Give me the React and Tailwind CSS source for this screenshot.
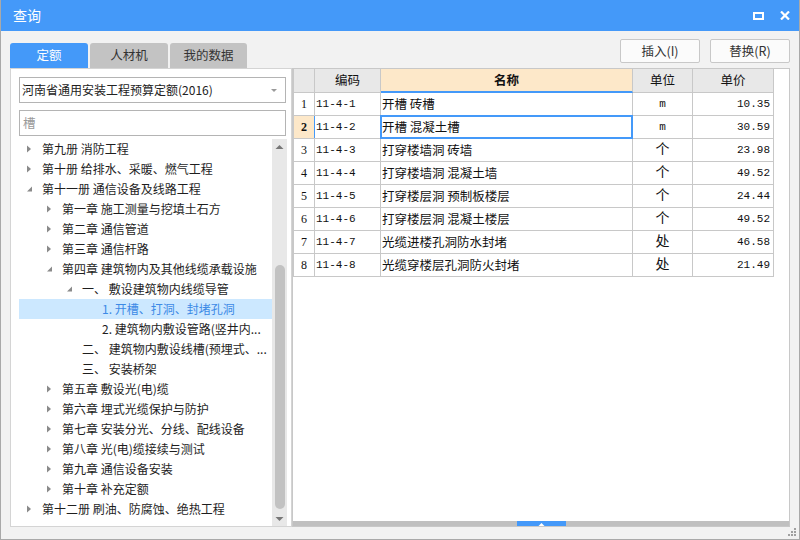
import React from "react";

const CJK = '"Noto Sans CJK SC", "Noto Sans", sans-serif';
const MONO = '"Liberation Mono", "Noto Sans CJK SC", monospace';

const tree = [
  { level: 0, label: "第九册 消防工程", arrow: "closed" },
  { level: 0, label: "第十册 给排水、采暖、燃气工程", arrow: "closed" },
  { level: 0, label: "第十一册 通信设备及线路工程", arrow: "open" },
  { level: 1, label: "第一章 施工测量与挖填土石方", arrow: "closed" },
  { level: 1, label: "第二章 通信管道", arrow: "closed" },
  { level: 1, label: "第三章 通信杆路", arrow: "closed" },
  { level: 1, label: "第四章 建筑物内及其他线缆承载设施", arrow: "open" },
  { level: 2, label: "一、  敷设建筑物内线缆导管", arrow: "open" },
  { level: 3, label: "1. 开槽、打洞、封堵孔洞", selected: true },
  { level: 3, label: "2. 建筑物内敷设管路(竖井内..." },
  { level: 2, label: "二、  建筑物内敷设线槽(预埋式、..." },
  { level: 2, label: "三、  安装桥架" },
  { level: 1, label: "第五章 敷设光(电)缆", arrow: "closed" },
  { level: 1, label: "第六章 埋式光缆保护与防护", arrow: "closed" },
  { level: 1, label: "第七章 安装分光、分线、配线设备", arrow: "closed" },
  { level: 1, label: "第八章 光(电)缆接续与测试", arrow: "closed" },
  { level: 1, label: "第九章 通信设备安装", arrow: "closed" },
  { level: 1, label: "第十章 补充定额", arrow: "closed" },
  { level: 0, label: "第十二册 刷油、防腐蚀、绝热工程", arrow: "closed" },
];

const rows = [
  ["11-4-1", "开槽 砖槽", "m", "10.35"],
  ["11-4-2", "开槽 混凝土槽", "m", "30.59"],
  ["11-4-3", "打穿楼墙洞 砖墙", "个", "23.98"],
  ["11-4-4", "打穿楼墙洞 混凝土墙", "个", "49.52"],
  ["11-4-5", "打穿楼层洞 预制板楼层", "个", "24.44"],
  ["11-4-6", "打穿楼层洞 混凝土楼层", "个", "49.52"],
  ["11-4-7", "光缆进楼孔洞防水封堵", "处", "46.58"],
  ["11-4-8", "光缆穿楼层孔洞防火封堵", "处", "21.49"],
];

const indent = ["pl-[6px]", "pl-[26px]", "pl-[46px]", "pl-[66px]"];

const Arrow = ({ type }) => {
  if (type === "closed")
    return (
      <svg width="17" height="20" viewBox="0 0 17 20" className="shrink-0">
        <path d="M2 6.5 L6 10 L2 13.5 Z" fill="#8a8a8a" />
      </svg>
    );
  if (type === "open")
    return (
      <svg width="17" height="20" viewBox="0 0 17 20" className="shrink-0">
        <path d="M7 7.5 L7 12.5 L2 12.5 Z" fill="#8a8a8a" />
      </svg>
    );
  return <span className="inline-block w-[17px] shrink-0" />;
};

const TreeRow = ({ item }) => (
  <div
    className={`flex items-center h-[20px] whitespace-nowrap ${indent[item.level]} ${
      item.selected ? "bg-[#cce8ff] text-[#3c8ae6]" : "text-[#1e1e1e]"
    }`}
  >
    <Arrow type={item.arrow} />
    <span>{item.label}</span>
  </div>
);

export default function App() {
  return (
    <div
      className="w-[800px] h-[540px] flex flex-col bg-[#f2f2f2] border-x border-b border-[#a9a9a9] overflow-hidden"
      style={{ fontFamily: CJK }}
    >
      {/* title bar */}
      <div className="h-[31px] -mx-px bg-[#4499f9] flex items-center justify-between pl-[13px] pr-[10px]">
        <span className="text-white text-[14px]">查询</span>
        <div className="flex items-center gap-[16px]">
          <svg width="11" height="8" viewBox="0 0 11 8">
            <rect x="1" y="1" width="9" height="6" fill="none" stroke="#fff" strokeWidth="2" />
          </svg>
          <svg width="10" height="9" viewBox="0 0 10 9">
            <path d="M1 0.5 L9 8.5 M9 0.5 L1 8.5" stroke="#fff" strokeWidth="2.2" />
          </svg>
        </div>
      </div>

      {/* body */}
      <div className="flex-1 flex flex-col pl-[9px] pr-[9px] pb-[12px]">
        <div className="h-[37px] flex justify-between">
          <div className="flex items-end gap-[2px] text-[12.5px]">
            <div className="w-[78px] h-[25px] rounded-t-[3px] bg-[#4499f9] text-white flex items-center justify-center">
              定额
            </div>
            <div className="w-[78px] h-[25px] rounded-t-[3px] bg-[#c3c3c3] text-[#333] flex items-center justify-center">
              人材机
            </div>
            <div className="w-[77px] h-[25px] rounded-t-[3px] bg-[#c3c3c3] text-[#333] flex items-center justify-center">
              我的数据
            </div>
          </div>
          <div className="flex gap-[10px] pt-[8px]">
            <button className="w-[80px] h-[24px] bg-[#fbfbfb] border border-[#c8c8c8] rounded-[2px] text-[12.5px] text-[#333]">
              插入(I)
            </button>
            <button className="w-[80px] h-[24px] bg-[#fbfbfb] border border-[#c8c8c8] rounded-[2px] text-[12.5px] text-[#333]">
              替换(R)
            </button>
          </div>
        </div>

        <div className="flex-1 flex min-h-0">
          {/* left panel */}
          <div className="w-[282px] bg-white border border-[#d4d4d4] flex flex-col pl-[8px] pr-[4px] pt-[8px]">
            <div className="w-[267px] h-[26px] border border-[#b4b4b4] flex items-center justify-between pl-[2px] pr-[8px] text-[12px] text-[#222]">
              <span>河南省通用安装工程预算定额(2016)</span>
              <svg width="6" height="3" viewBox="0 0 6 3">
                <path d="M0 0 L6 0 L3 3 Z" fill="#9a9a9a" />
              </svg>
            </div>
            <div className="mt-[7px] w-[267px] h-[26px] border border-[#b4b4b4] flex items-center pl-[3px] text-[12.5px] text-[#9a9a9a]">
              槽
            </div>
            <div className="flex-1 flex mt-[3px] min-h-0">
              <div className="w-[253px] text-[12px] overflow-hidden">
                {tree.map((item, i) => (
                  <TreeRow key={i} item={item} />
                ))}
              </div>
              <div className="w-[15px] bg-[#e8e8e8] flex flex-col items-center">
                <svg width="9" height="14" viewBox="0 0 9 14" className="mt-[2px]">
                  <path d="M0.5 8 L8.5 8 L4.5 4 Z" fill="#777" />
                </svg>
                <div className="flex-1 w-full flex flex-col items-center pt-[110px] pb-[4px]">
                  <div className="w-[10px] flex-1 rounded-full bg-[#c2c2c2]" />
                </div>
                <svg width="9" height="12" viewBox="0 0 9 12" className="mb-[1px]">
                  <path d="M0.5 4 L8.5 4 L4.5 8 Z" fill="#777" />
                </svg>
              </div>
            </div>
          </div>

          {/* right panel */}
          <div className="w-[498px] bg-white border border-[#c8c8c8] flex flex-col">
            <div className="w-[481px] border-l border-[#c8c8c8] text-[12.5px] text-[#111]">
              <div className="flex h-[24px] border-b border-[#c8c8c8]">
                <div className="w-[21px] bg-[#e8e8e8] border-r border-[#c8c8c8]" />
                <div className="w-[66px] bg-[#e8e8e8] border-r border-[#c8c8c8] flex items-center justify-center">
                  编码
                </div>
                <div className="w-[252px] bg-[#fde8c9] border-r border-[#c8c8c8] border-b-2 border-b-[#4499f9] -mb-px flex items-center justify-center font-bold">
                  名称
                </div>
                <div className="w-[60px] bg-[#e8e8e8] border-r border-[#c8c8c8] flex items-center justify-center">
                  单位
                </div>
                <div className="w-[81px] bg-[#e8e8e8] border-r border-[#c8c8c8] flex items-center justify-center">
                  单价
                </div>
              </div>
              {rows.map((r, i) => {
                const sel = i === 1;
                return (
                  <div key={i} className="flex h-[23px] border-b border-[#c8c8c8]">
                    <div
                      className={`w-[21px] border-r flex items-center justify-center text-[12px] ${
                        sel ? "bg-[#fde8c9] font-bold border-[#4499f9]" : "border-[#c8c8c8]"
                      }`}
                      style={{ fontFamily: '"Liberation Serif", serif' }}
                    >
                      {i + 1}
                    </div>
                    <div
                      className="w-[66px] border-r border-[#c8c8c8] flex items-center pl-[1px] text-[11px]"
                      style={{ fontFamily: MONO }}
                    >
                      {r[0]}
                    </div>
                    <div className="relative w-[252px] border-r border-[#c8c8c8] flex items-center pl-[1px]">
                      {r[1]}
                      {sel && (
                        <div className="absolute left-[-1px] top-[-1px] right-[-1px] bottom-[-1px] border-2 border-[#4499f9]" />
                      )}
                    </div>
                    <div
                      className={`w-[60px] border-r border-[#c8c8c8] flex items-center justify-center ${
                        r[2] === "m" ? "text-[11px]" : "text-[14px]"
                      }`}
                      style={{ fontFamily: MONO }}
                    >
                      {r[2]}
                    </div>
                    <div
                      className="w-[81px] border-r border-[#c8c8c8] flex items-center justify-end pr-[3px] text-[11px]"
                      style={{ fontFamily: MONO }}
                    >
                      {r[3]}
                    </div>
                  </div>
                );
              })}
            </div>
            <div className="flex-1" />
            <div className="h-[5px] bg-[#c0c0c0] flex justify-center">
              <div className="w-[49px] h-[5px] bg-[#4499f9] flex items-end justify-center">
                <svg width="7" height="4" viewBox="0 0 7 4">
                  <path d="M0.5 4 L6.5 4 L3.5 1 Z" fill="#fff" />
                </svg>
              </div>
            </div>
          </div>
        </div>
      </div>

      {/* resize grip */}
      <div className="relative">
        <svg width="10" height="10" viewBox="0 0 10 10" className="absolute right-[2px] bottom-[2px]">
          <rect x="7" y="1" width="2" height="2" fill="#a0a0a0" />
          <rect x="4" y="4" width="2" height="2" fill="#a0a0a0" />
          <rect x="7" y="4" width="2" height="2" fill="#a0a0a0" />
          <rect x="1" y="7" width="2" height="2" fill="#a0a0a0" />
          <rect x="4" y="7" width="2" height="2" fill="#a0a0a0" />
          <rect x="7" y="7" width="2" height="2" fill="#a0a0a0" />
        </svg>
      </div>
    </div>
  );
}
